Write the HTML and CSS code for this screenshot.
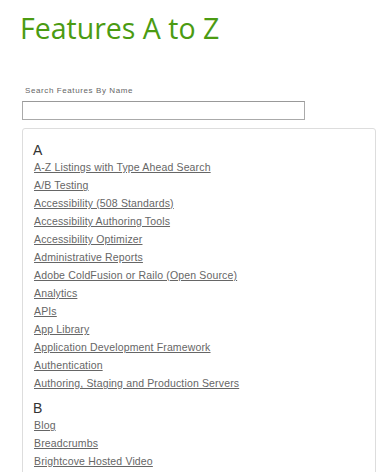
FILE: index.html
```html
<!DOCTYPE html>
<html>
<head>
<meta charset="utf-8">
<link rel="stylesheet" href="styles.css">
</head>
<body>
<div class="page">
  <h1 class="title">Features A to Z</h1>
  <label class="search-label" for="q">Search Features By Name</label>
  <input class="search-input" id="q" type="text">
  <div class="panel">
    <h2 class="letter">A</h2>
    <ul class="list">
      <li><a href="#">A-Z Listings with Type Ahead Search</a></li>
      <li><a href="#">A/B Testing</a></li>
      <li><a href="#">Accessibility (508 Standards)</a></li>
      <li><a href="#">Accessibility Authoring Tools</a></li>
      <li><a href="#">Accessibility Optimizer</a></li>
      <li><a href="#">Administrative Reports</a></li>
      <li><a href="#">Adobe ColdFusion or Railo (Open Source)</a></li>
      <li><a href="#">Analytics</a></li>
      <li><a href="#">APIs</a></li>
      <li><a href="#">App Library</a></li>
      <li><a href="#">Application Development Framework</a></li>
      <li><a href="#">Authentication</a></li>
      <li><a href="#">Authoring, Staging and Production Servers</a></li>
    </ul>
    <h2 class="letter">B</h2>
    <ul class="list">
      <li><a href="#">Blog</a></li>
      <li><a href="#">Breadcrumbs</a></li>
      <li><a href="#">Brightcove Hosted Video</a></li>
    </ul>
  </div>
</div>
</body>
</html>
```
FILE: styles.css
```css
html, body {
  margin: 0;
  padding: 0;
  background: #fff;
  overflow: hidden;
}
.page {
  padding: 10px 0 0 20px;
  width: 362px;
  height: 462px;
  overflow: hidden;
  font-family: "Liberation Sans", Arial, sans-serif;
}
.title {
  margin: 0;
  font-family: "Open Sans", sans-serif;
  font-weight: 400;
  font-size: 28.5px;
  line-height: 36px;
  color: #4b9b12;
}
.search-label {
  display: block;
  margin: 40px 0 0 5px;
  font-size: 8px;
  line-height: 10px;
  letter-spacing: 0.6px;
  color: #666;
}
.search-input {
  display: block;
  box-sizing: border-box;
  margin: 5px 0 0 2px;
  width: 283px;
  height: 19px;
  border: 1px solid #aaa;
  border-top-color: #999;
  padding: 0;
  background: #fff;
}
.panel {
  box-sizing: border-box;
  margin: 8px 0 0 2px;
  width: 354px;
  height: 400px;
  border: 1px solid #ddd;
  border-radius: 3px;
  padding: 13px 0 0 10px;
}
.letter {
  margin: 0;
  font-weight: 400;
  font-size: 14px;
  line-height: 16px;
  color: #333;
}
.list {
  list-style: none;
  margin: 0 0 8px 0;
  padding: 0 0 0 1px;
}
.list li {
  font-size: 10.5px;
  line-height: 18px;
  letter-spacing: 0.15px;
}
.list a {
  color: #666;
  text-decoration: underline;
}
```
